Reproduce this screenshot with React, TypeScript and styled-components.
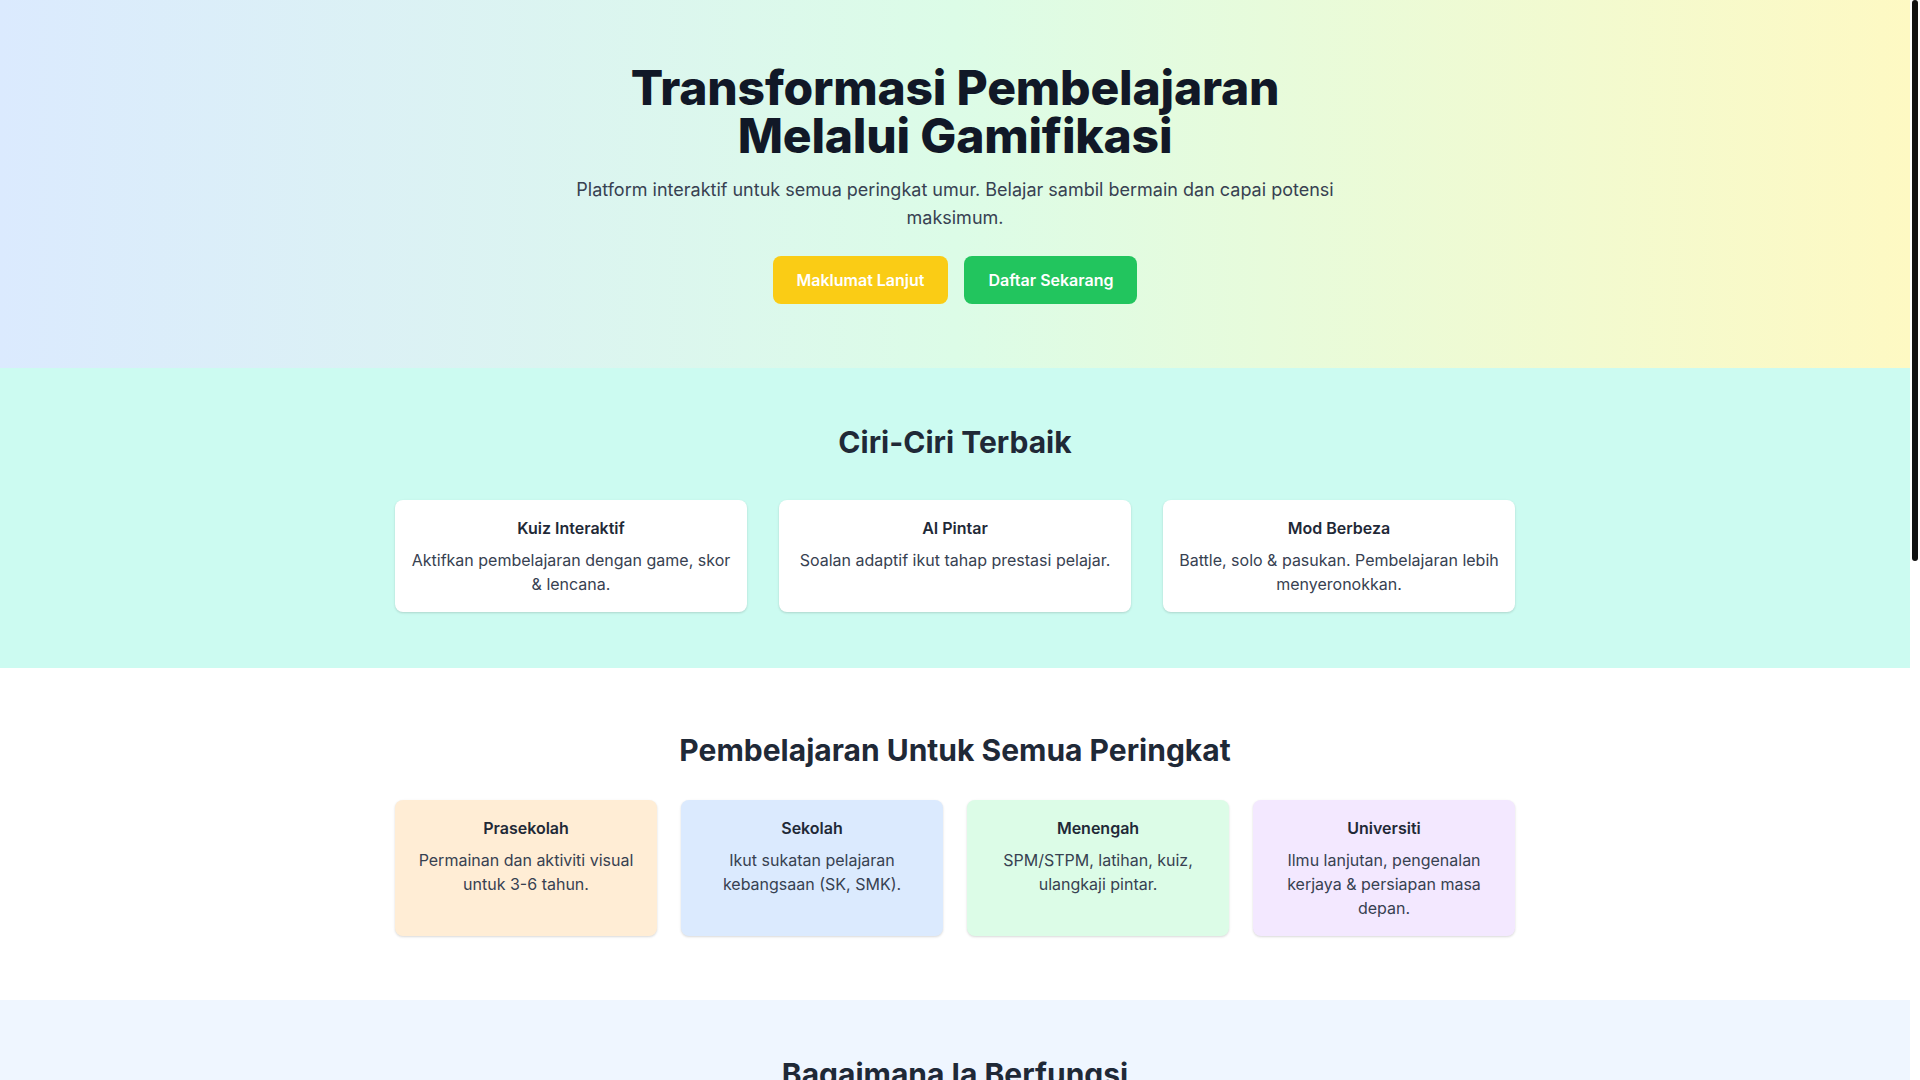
import styled, { createGlobalStyle } from "styled-components";

const GlobalStyle = createGlobalStyle`
  html, body {
    margin: 0;
    padding: 0;
    background: #fff;
    font-family: Inter, "Noto Sans", "Liberation Sans", sans-serif;
    color: #1f2937;
    overflow: hidden;
  }
  * {
    box-sizing: border-box;
  }
`;

const Shell = styled.div`
  display: flex;
  height: 100vh;
`;

const Page = styled.div`
  flex: 1;
  min-width: 0;
  overflow-y: auto;
  scrollbar-width: none;
  &::-webkit-scrollbar {
    display: none;
  }
`;

// scrollbar rail, drawn since the headless browser hides native ones
const Rail = styled.div`
  position: relative;
  flex: 0 0 10px;
  background: #fff;
`;

const Thumb = styled.div`
  position: absolute;
  top: 0;
  left: 2px;
  width: 6px;
  height: 561px;
  border-radius: 3px;
  background: #111;
`;

const Hero = styled.section`
  background: linear-gradient(to right, #dbeafe, #dcfce7, #fef9c3);
  padding: 64px 16px;
  text-align: center;
`;

const HeroTitle = styled.h1`
  margin: 0 auto 16px;
  max-width: 768px;
  font-size: 48px;
  line-height: 48px;
  font-weight: 800;
  color: #111827;
  letter-spacing: -0.2px;
`;

const HeroText = styled.p`
  margin: 0 auto;
  max-width: 768px;
  font-size: 18px;
  line-height: 28px;
  color: #374151;
`;

const ButtonRow = styled.div`
  margin-top: 24px;
  display: flex;
  justify-content: center;
  gap: 16px;
`;

const Button = styled.button<{ $tone: "yellow" | "green" }>`
  border: none;
  border-radius: 8px;
  padding: 12px 24px;
  font-family: inherit;
  font-size: 16px;
  line-height: 24px;
  font-weight: 600;
  color: #fff;
  cursor: pointer;
  background: ${(p) => (p.$tone === "yellow" ? "#facc15" : "#22c55e")};
`;

const Section = styled.section<{ $bg: string; $pad: number }>`
  background: ${(p) => p.$bg};
  padding: ${(p) => p.$pad}px 0;
`;

const Container = styled.div`
  max-width: 1152px;
  margin: 0 auto;
  padding: 0 16px;
`;

const SectionTitle = styled.h2<{ $gap: number }>`
  margin: 0 0 ${(p) => p.$gap}px;
  text-align: center;
  font-size: 30px;
  line-height: 36px;
  font-weight: 700;
  color: #1f2937;
`;

const Grid = styled.div<{ $cols: number; $gap: number }>`
  display: grid;
  grid-template-columns: repeat(${(p) => p.$cols}, 1fr);
  gap: ${(p) => p.$gap}px;
`;

const Card = styled.div<{ $bg?: string }>`
  background: ${(p) => p.$bg || "#fff"};
  border-radius: 8px;
  padding: 16px;
  text-align: center;
  box-shadow: 0 1px 3px rgba(0, 0, 0, 0.1), 0 1px 2px rgba(0, 0, 0, 0.06);
`;

const CardTitle = styled.h3`
  margin: 0 0 8px;
  font-size: 16px;
  line-height: 24px;
  font-weight: 600;
  color: #1f2937;
`;

const CardText = styled.p`
  margin: 0;
  font-size: 16px;
  line-height: 24px;
  color: #374151;
`;

const StepNum = styled.div`
  width: 40px;
  height: 40px;
  margin: 0 auto 12px;
  border-radius: 50%;
  background: #22c55e;
  color: #fff;
  font-weight: 700;
  display: flex;
  align-items: center;
  justify-content: center;
`;

const Quote = styled.p`
  margin: 0 0 12px;
  font-size: 16px;
  line-height: 24px;
  font-style: italic;
  color: #374151;
`;

const QuoteBy = styled.span`
  font-size: 14px;
  font-weight: 600;
  color: #1f2937;
`;

const Footer = styled.footer`
  background: #1f2937;
  color: #d1d5db;
  padding: 40px 16px;
  text-align: center;
  font-size: 14px;
  line-height: 22px;
`;

const FooterLinks = styled.div`
  display: flex;
  justify-content: center;
  gap: 24px;
  margin-bottom: 16px;
  color: #fff;
`;

const features = [
  { title: "Kuiz Interaktif", text: "Aktifkan pembelajaran dengan game, skor & lencana." },
  { title: "AI Pintar", text: "Soalan adaptif ikut tahap prestasi pelajar." },
  { title: "Mod Berbeza", text: "Battle, solo & pasukan. Pembelajaran lebih menyeronokkan." },
];

const levels = [
  { title: "Prasekolah", text: "Permainan dan aktiviti visual untuk 3-6 tahun.", bg: "#ffedd5" },
  { title: "Sekolah", text: "Ikut sukatan pelajaran kebangsaan (SK, SMK).", bg: "#dbeafe" },
  { title: "Menengah", text: "SPM/STPM, latihan, kuiz, ulangkaji pintar.", bg: "#dcfce7" },
  { title: "Universiti", text: "Ilmu lanjutan, pengenalan kerjaya & persiapan masa depan.", bg: "#f3e8ff" },
];

const steps = [
  { title: "Daftar Akaun", text: "Cipta akaun percuma dalam masa seminit." },
  { title: "Pilih Peringkat", text: "Pilih tahap dan subjek yang sesuai." },
  { title: "Main & Belajar", text: "Jawab kuiz, kumpul mata dan lencana." },
  { title: "Pantau Prestasi", text: "Lihat kemajuan melalui laporan pintar." },
];

const quotes = [
  { text: "“Anak saya lebih bersemangat untuk belajar setiap hari.”", by: "Puan Aisyah, Ibu Bapa" },
  { text: "“Kuiz interaktif memudahkan saya menilai murid di kelas.”", by: "Cikgu Hafiz, Guru" },
  { text: "“Ulangkaji SPM jadi lebih seronok dan teratur.”", by: "Nurul, Pelajar" },
];

export default function App() {
  return (
    <>
      <GlobalStyle />
      <Shell>
        <Page>
          <Hero>
            <HeroTitle>Transformasi Pembelajaran Melalui Gamifikasi</HeroTitle>
            <HeroText>
              Platform interaktif untuk semua peringkat umur. Belajar sambil bermain dan capai
              potensi maksimum.
            </HeroText>
            <ButtonRow>
              <Button $tone="yellow">Maklumat Lanjut</Button>
              <Button $tone="green">Daftar Sekarang</Button>
            </ButtonRow>
          </Hero>

          <Section $bg="#ccfbf1" $pad={56}>
            <Container>
              <SectionTitle $gap={40}>Ciri-Ciri Terbaik</SectionTitle>
              <Grid $cols={3} $gap={32}>
                {features.map((f) => (
                  <Card key={f.title}>
                    <CardTitle>{f.title}</CardTitle>
                    <CardText>{f.text}</CardText>
                  </Card>
                ))}
              </Grid>
            </Container>
          </Section>

          <Section $bg="#fff" $pad={64}>
            <Container>
              <SectionTitle $gap={32}>Pembelajaran Untuk Semua Peringkat</SectionTitle>
              <Grid $cols={4} $gap={24}>
                {levels.map((l) => (
                  <Card key={l.title} $bg={l.bg}>
                    <CardTitle>{l.title}</CardTitle>
                    <CardText>{l.text}</CardText>
                  </Card>
                ))}
              </Grid>
            </Container>
          </Section>

          <Section $bg="#eff6ff" $pad={56}>
            <Container>
              <SectionTitle $gap={40}>Bagaimana Ia Berfungsi</SectionTitle>
              <Grid $cols={4} $gap={24}>
                {steps.map((s, i) => (
                  <Card key={s.title}>
                    <StepNum>{i + 1}</StepNum>
                    <CardTitle>{s.title}</CardTitle>
                    <CardText>{s.text}</CardText>
                  </Card>
                ))}
              </Grid>
            </Container>
          </Section>

          <Section $bg="#fff" $pad={64}>
            <Container>
              <SectionTitle $gap={32}>Apa Kata Mereka</SectionTitle>
              <Grid $cols={3} $gap={32}>
                {quotes.map((q) => (
                  <Card key={q.by} $bg="#f9fafb">
                    <Quote>{q.text}</Quote>
                    <QuoteBy>{q.by}</QuoteBy>
                  </Card>
                ))}
              </Grid>
            </Container>
          </Section>

          <Hero>
            <SectionTitle $gap={16}>Sedia Untuk Bermula?</SectionTitle>
            <HeroText>Sertai ribuan pelajar yang belajar dengan cara yang lebih menyeronokkan.</HeroText>
            <ButtonRow>
              <Button $tone="green">Daftar Sekarang</Button>
            </ButtonRow>
          </Hero>

          <Footer>
            <FooterLinks>
              <span>Tentang Kami</span>
              <span>Hubungi</span>
              <span>Privasi</span>
              <span>Terma</span>
            </FooterLinks>
            © 2024 Platform Gamifikasi Pembelajaran. Hak cipta terpelihara.
          </Footer>
        </Page>
        <Rail>
          <Thumb />
        </Rail>
      </Shell>
    </>
  );
}
